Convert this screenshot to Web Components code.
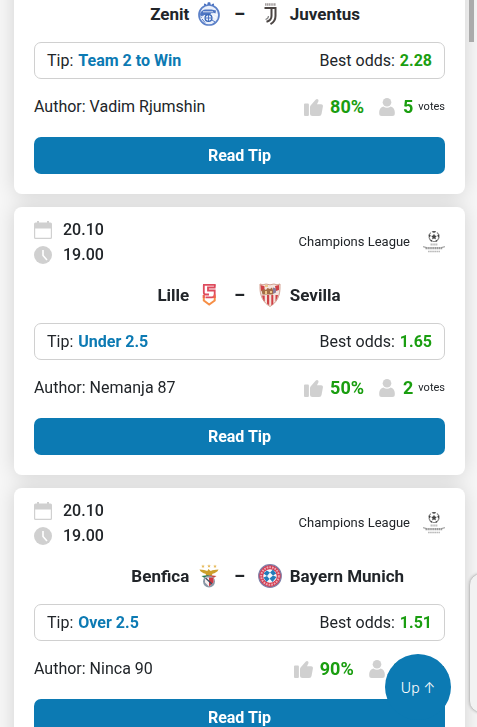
<!DOCTYPE html>
<html lang="en">
<head>
<meta charset="utf-8">
<meta name="viewport" content="width=device-width, initial-scale=1">
<title>Betting tips</title>
<style>
  html {
    height: 100%;
    overflow: hidden;
  }
  body {
    margin: 0;
    height: 100%;
    overflow: hidden;
    background: #f7f7f7;
    color: #212529;
    font-family: Roboto, "Liberation Sans", sans-serif;
    font-size: 16px;
    line-height: 24px;
  }
</style>
</head>
<body>
<tip-list>
  <tip-card continued tip="Team 2 to Win" odds="2.28" author="Vadim Rjumshin" rating="80%" votes="5">
    <team-side slot="home" crest="zenit">Zenit</team-side>
    <team-side slot="away" crest="juventus" away>Juventus</team-side>
  </tip-card>
  <tip-card tip="Under 2.5" odds="1.65" author="Nemanja 87" rating="50%" votes="2">
    <match-head slot="head" date="20.10" time="19.00">Champions League</match-head>
    <team-side slot="home" crest="lille">Lille</team-side>
    <team-side slot="away" crest="sevilla" away>Sevilla</team-side>
  </tip-card>
  <tip-card tip="Over 2.5" odds="1.51" author="Ninca 90" rating="90%" votes="10">
    <match-head slot="head" date="20.10" time="19.00">Champions League</match-head>
    <team-side slot="home" crest="benfica">Benfica</team-side>
    <team-side slot="away" crest="bayern" away>Bayern Munich</team-side>
  </tip-card>
</tip-list>
<scroll-thumb></scroll-thumb>
<edge-panel></edge-panel>
<up-button>Up ↑</up-button>

<script>
const icons = {
  calendar: `<svg width="18" height="18" viewBox="0 0 18 18">
    <path fill="#d0d0d0" fill-rule="evenodd" d="M3 0h2v1.500h8V0h2v1.500h1.500a1.500 1.500 0 0 1 1.500 1.500v13.500a1.500 1.500 0 0 1-1.500 1.500h-15A1.500 1.500 0 0 1 0 16.500V3a1.500 1.500 0 0 1 1.500-1.500H3zM1.200 7.500v8.700c0 .4.200.6.600.6h14.400c.4 0 .6-.2.600-.6V7.500z"/></svg>`,
  clock: `<svg width="18" height="18" viewBox="0 0 18 18">
    <circle cx="9" cy="9" r="9" fill="#d0d0d0"/>
    <path d="M9 4v5.500l4 4.500" fill="none" stroke="#fff" stroke-width="1.600"/></svg>`,
  thumb: `<svg width="19" height="17" viewBox="0 0 19 17">
    <path fill="#d0d0d0" d="M1 4.500h3a.9.9 0 0 1 .9.900V16a1 1 0 0 1-1 1H1a1 1 0 0 1-1-1V5.500a1 1 0 0 1 1-1zM6 8.200c0-.9.300-1.500 1-2.200l4.600-5.200c.8-.9 1.900-.9 2.500-.2.500.6.500 1.300.200 2L13 5.300h4.200c1.200 0 1.900 1 1.700 2.200l-1.300 7.300A2.600 2.600 0 0 1 15 17H8.500A2.500 2.500 0 0 1 6 14.500z"/></svg>`,
  person: `<svg width="16" height="18" viewBox="0 0 16 18">
    <circle cx="8" cy="4.300" r="4.300" fill="#d0d0d0"/>
    <path fill="#d0d0d0" d="M4.300 8.500a6.500 6.500 0 0 0 7.400 0c2.500.7 4.100 3 4.100 5.500v1.500a2.500 2.500 0 0 1-2.500 2.500H2.700A2.500 2.500 0 0 1 .2 15.500V14c0-2.500 1.600-4.800 4.100-5.500z"/></svg>`,
  champions: `<svg width="22" height="24" viewBox="0 0 22 24">
    <circle cx="11" cy="6.500" r="5" fill="none" stroke="#8a8a8a" stroke-width="1.200" stroke-dasharray="4 1.200"/>
    <path fill="#444" d="M11 3.800l.9 1.800 2 .3-1.400 1.400.3 2-1.800-.9-1.800.9.300-2-1.400-1.400 2-.3zM9 1.200h4L11 3zM5.800 4.300L8 5.700 5.800 7.700zM16.200 4.300L14 5.700l2.200 2zM7 10.700l2.200-1v2.200zM15 10.700l-2.200-1v2.200z"/>
    <path d="M7.500 14.500h7" stroke="#c0c0c0" stroke-width="2" stroke-dasharray="1.500 .3"/>
    <path d="M0 16.700l3.500 1M22 16.700l-3.500 1" stroke="#aaa" stroke-width="1.200"/>
    <path d="M2.500 18.200h17" stroke="#9a9a9a" stroke-width="2.200" stroke-dasharray="1.500 .4"/>
    <path d="M5 21.500h12" stroke="#bbb" stroke-width="1.700" stroke-dasharray="1.700 .4"/></svg>`
};

const crests = {
  zenit: `<circle cx="12" cy="13" r="10" fill="#eaf0fb" stroke="#5b80c8" stroke-width="1.700"/>
    <path fill="#4e75c2" d="M10.500.8L12 0l1.500.8V3h-3zM7 1.500l2 .4v2l-2-.3zM17 1.500l-2 .4v2l2-.3zM3 12c1-3 3.200-4.500 5.500-4.500h6l4.500 1-.5 3-4-.5-2 2H7.500L4 16z"/>
    <path d="M6 9.800h10M4 14.500l4-.5M14 13l5 3M16 11l4 2" stroke="#fff" stroke-width=".8"/>
    <circle cx="11.500" cy="16" r="3.400" fill="#e8effb" stroke="#3564b5" stroke-width="1.300"/>
    <path d="M11.500 13v6M8.500 16h6M5 17l3 3.500M15 18l3 2" stroke="#4e75c2" stroke-width="1"/>`,
  juventus: `<path d="M7 2.500h11" stroke="#a5a0a0" stroke-width="2.600" stroke-dasharray="1.400 .4"/>
    <path d="M6.500 6h11v8c0 4-2 6.500-5 8.200" fill="none" stroke="#4b4543" stroke-width="2"/>
    <path d="M7.500 6h6v8c0 3-1.700 4.800-5 5.800" fill="none" stroke="#4b4543" stroke-width="2"/>
    <path d="M7.500 17.500c2-.6 3-1.800 3-3.500" fill="none" stroke="#888" stroke-width="1.200"/>`,
  lille: `<path d="M6 1.800h12.500M6.800 2v7.500c0 1.200.7 2 1.900 2H12M18 1.500l-.3 3H11v3h6.700v4c0 1.800-.9 2.800-2.700 2.800H8.500" fill="none" stroke="#de4b5d" stroke-width="1.800"/>
    <path d="M6.800 12v5.500l5.400 4 5.500-4V13" fill="none" stroke="#f68f46" stroke-width="2"/>
    <path d="M6.800 12v3M17.700 11.500V15" stroke="#ee6250" stroke-width="2"/>`,
  sevilla: `<path fill="#f4e4dd" stroke="#c98c78" stroke-width=".8" d="M2 1l3 .8L8 1l4 .8L16 1l3 .8L22 1c0 4 .2 7-1 11-1.500 5-4 8.500-9 11.500C7 20.500 4.500 17 3 12 1.800 8 2 5 2 1z"/>
    <path fill="#cf4146" d="M2.500 2l4 1.200v4L3 8zM4 12.500h2.700v6.300c-1.200-1.700-2.200-3.800-2.700-6.300zM9 12h2.200v10.300L9 20.800zM13.300 12h2v9l-2 1.400zM17.500 12H20c-.5 2.500-1.300 4.700-2.500 6.500zM17 3l4-1v5l-3 1z"/>
    <path fill="#a46c45" d="M3.500 7.500L6 6l2 1 1.500-2 2.500 1 2-1.500 1 2.500v4.500H4.500z"/>
    <path fill="#edc88a" d="M7 8h2v3H7zM12 8h2v2h-2zM7 2h3v2H7z"/>
    <path fill="#8c7b98" d="M15 4.500l3 1v4l-3 1.500z"/>`,
  benfica: `<path fill="#e7bc61" d="M6 .5l.6 1.200 1.200.1-.9.800.3 1.200L6 3.200l-1.200.6.300-1.200-.9-.8 1.200-.1zM12 .2l.6 1.200 1.200.1-.9.800.3 1.200-1.200-.6-1.200.6.300-1.200-.9-.8 1.200-.1zM18 .5l.6 1.200 1.200.1-.9.800.3 1.200-1.200-.6-1.200.6.300-1.200-.9-.8 1.200-.1z"/>
    <path fill="#cc9f2b" d="M2.500 5.500c3.500.2 6 .8 7.800 1.600L11.500 5l1.500 1.500.8.500c2-1 4.200-1.400 7.700-1.500-1 2.500-3.500 3.700-6 4.200L14.500 12h-5l-1-2.300c-2.500-.5-5-1.700-6-4.200z"/>
    <path fill="#287a4f" d="M4.500 12l7-1 1 1.500-5 1.500z"/><path fill="#c64940" d="M12 11l7.500 1-3 2-4-1z"/>
    <circle cx="12" cy="17.500" r="6" fill="#8997a6"/>
    <path fill="#f8eeee" d="M8 13.500h8.500v5L12 22.500l-4-4z"/>
    <path fill="#ce3843" d="M12 13.500h4.500v5L12 22.500z"/><path d="M8.500 14l6.500 6" stroke="#344f66" stroke-width="1.200"/>`,
  bayern: `<circle cx="12" cy="12" r="11.300" fill="#d33a50" stroke="#7f82ab" stroke-width="1.200"/>
    <circle cx="12" cy="12" r="8.800" fill="none" stroke="#eca9b4" stroke-width="2" stroke-dasharray="1.700 1"/>
    <circle cx="12" cy="12" r="6.800" fill="#f4f8fc"/>
    <path fill="#237cba" d="M5.600 9.500L8.700 6.500l3.300 2-3 3.500zM12 8.500l3-3 3.200 4L15 11.500zM5.500 13.500L9 12l2.500 3L8.500 18zM11.500 14.500l3.500-3 3.500 1.500-4 5z"/>`
};

// keeps the markup of each element next to its class
function build(host, html) {
  const template = document.createElement('template');
  template.innerHTML = html;
  host.attachShadow({ mode: 'open' });
  host.shadowRoot.appendChild(template.content.cloneNode(true));
}

class TipList extends HTMLElement {
  constructor() {
    super();
    // one shadow for the whole list, so that no card darkens its neighbour
    build(this, `
      <style>
        :host {
          display: flex;
          flex-direction: column;
          gap: 13px;
          margin-top: -40px;
          padding: 0 12px 0 14px;
          filter: drop-shadow(0 0 10px rgba(0, 0, 0, 0.15));
        }
      </style>
      <slot></slot>
    `);
  }
}

class MatchHead extends HTMLElement {
  connectedCallback() {
    build(this, `
      <style>
        :host {
          display: flex;
          justify-content: space-between;
          align-items: center;
          padding-top: 10px;
          margin-bottom: 14px;
        }
        .row {
          display: flex;
          align-items: center;
          gap: 11px;
          height: 25px;
          font-weight: 500;
        }
        .league {
          display: flex;
          align-items: center;
          gap: 13px;
          font-size: 13px;
        }
        svg { display: block; }
      </style>
      <div>
        <div class="row">${icons.calendar}<span>${this.getAttribute('date')}</span></div>
        <div class="row">${icons.clock}<span>${this.getAttribute('time')}</span></div>
      </div>
      <div class="league"><slot></slot>${icons.champions}</div>
    `);
  }
}

class TeamSide extends HTMLElement {
  connectedCallback() {
    build(this, `
      <style>
        :host {
          display: flex;
          flex: 1;
          align-items: center;
          justify-content: flex-end;
          gap: 8px;
        }
        :host([away]) {
          flex-direction: row-reverse;
        }
        svg { display: block; }
      </style>
      <span><slot></slot></span>
      <svg width="24" height="24" viewBox="0 0 24 24">${crests[this.getAttribute('crest')]}</svg>
    `);
  }
}

class TipCard extends HTMLElement {
  connectedCallback() {
    build(this, `
      <style>
        :host {
          display: block;
          padding: 0 20px 20px;
          border-radius: 8px;
          background: #fff;
        }
        :host([continued]) {
          padding-top: 40px;
        }
        .teams {
          display: flex;
          align-items: center;
          gap: 13px;
          height: 28px;
          font-size: 17px;
          font-weight: 700;
        }
        .dash { font-weight: 900; }
        .tip {
          display: flex;
          justify-content: space-between;
          align-items: center;
          box-sizing: border-box;
          height: 37px;
          margin-top: 14px;
          padding: 0 12px;
          border: 1px solid #d0d0d0;
          border-radius: 7px;
        }
        .tip span {
          display: flex;
          gap: 5px;
        }
        b { font-weight: 700; }
        .pick { color: #0c7ab3; }
        .good { color: #1a9e10; }
        .info {
          display: flex;
          justify-content: space-between;
          align-items: center;
          height: 24px;
          margin: 16px 0 18px;
        }
        .stats {
          display: flex;
          align-items: center;
        }
        .stats b {
          font-size: 18px;
          margin: 0 15px 0 7px;
        }
        .stats .count {
          margin: 0 5px 0 8px;
        }
        .stats small { font-size: 11px; }
        .read {
          display: block;
          border-radius: 7px;
          background: #0c7ab3;
          color: #fff;
          font-weight: 700;
          line-height: 37px;
          text-align: center;
          text-decoration: none;
        }
        svg { display: block; }
      </style>
      <slot name="head"></slot>
      <div class="teams">
        <slot name="home"></slot>
        <span class="dash">–</span>
        <slot name="away"></slot>
      </div>
      <div class="tip">
        <span>Tip: <b class="pick">${this.getAttribute('tip')}</b></span>
        <span>Best odds: <b class="good">${this.getAttribute('odds')}</b></span>
      </div>
      <div class="info">
        <span>Author: ${this.getAttribute('author')}</span>
        <div class="stats">
          ${icons.thumb}<b class="good">${this.getAttribute('rating')}</b>
          ${icons.person}<b class="good count">${this.getAttribute('votes')}</b>
          <small>votes</small>
        </div>
      </div>
      <a class="read" href="#tip">Read Tip</a>
    `);
  }
}

class UpButton extends HTMLElement {
  constructor() {
    super();
    build(this, `
      <style>
        :host {
          position: fixed;
          right: 26px;
          bottom: 7px;
        }
        button {
          display: block;
          width: 66px;
          height: 66px;
          padding: 0;
          border: 0;
          border-radius: 50%;
          background: #0c7ab3;
          color: #fff;
          font-family: Inter, "Open Sans", sans-serif;
          font-size: 14px;
          font-weight: 300;
        }
      </style>
      <button type="button"><slot></slot></button>
    `);
  }
}

class ScrollThumb extends HTMLElement {
  constructor() {
    super();
    build(this, `
      <style>
        :host {
          position: fixed;
          top: 0;
          right: 3px;
          width: 5px;
          height: 42px;
          background: #ababab;
        }
      </style>
    `);
  }
}

// collapsed side panel peeking in from the right edge
class EdgePanel extends HTMLElement {
  constructor() {
    super();
    build(this, `
      <style>
        :host {
          position: fixed;
          right: -20px;
          bottom: 14px;
          width: 26px;
          height: 138px;
          border: 1px solid #c4c4c4;
          border-radius: 12px;
          background: #f2f2f2;
          box-shadow: 0 0 3px rgba(0, 0, 0, 0.2);
        }
      </style>
    `);
  }
}

customElements.define('tip-list', TipList);
customElements.define('match-head', MatchHead);
customElements.define('team-side', TeamSide);
customElements.define('tip-card', TipCard);
customElements.define('up-button', UpButton);
customElements.define('scroll-thumb', ScrollThumb);
customElements.define('edge-panel', EdgePanel);
</script>
</body>
</html>
